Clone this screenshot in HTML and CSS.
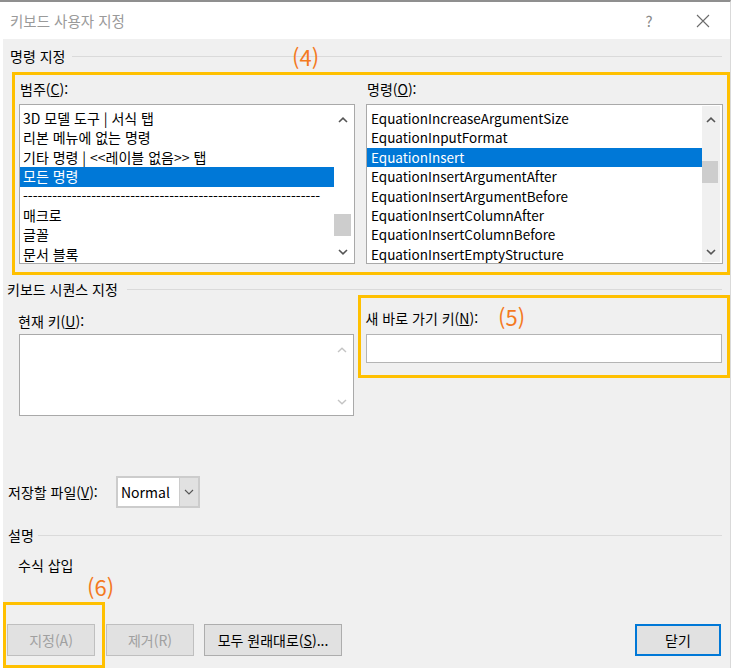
FILE: index.html
```html
<!DOCTYPE html>
<html lang="ko">
<head>
    <meta charset="UTF-8">
    <title>키보드 사용자 지정</title>
    <link rel="stylesheet" href="styles.css">
</head>
<body>
    <div class="window">
        <header class="titlebar">
            <span class="title">키보드 사용자 지정</span>
            <span class="help">?</span>
            <span class="close">
                <svg width="14" height="14" viewBox="0 0 14 14"><path d="M1 1L13 13M13 1L1 13" stroke="#6b6b6b" stroke-width="1.1" fill="none"/></svg>
            </span>
        </header>

        <main class="content">
            <span class="note note4">(4)</span>
            <span class="note note5">(5)</span>
            <span class="note note6">(6)</span>

            <div class="group-head head-cmd"><span>명령 지정</span><i class="rule"></i></div>

            <div class="mark mark-cmd">
                <div class="col col-cat">
                    <div class="label">범주(<u>C</u>):</div>
                    <div class="listbox">
                        <ul class="items">
                            <li>3D 모델 도구 | 서식 탭</li>
                            <li>리본 메뉴에 없는 명령</li>
                            <li>기타 명령 | &lt;&lt;레이블 없음&gt;&gt; 탭</li>
                            <li class="selected">모든 명령</li>
                            <li>-------------------------------------------------------------</li>
                            <li>매크로</li>
                            <li>글꼴</li>
                            <li>문서 블록</li>
                        </ul>
                        <div class="vscroll">
                            <span class="arrow arrow-up"><svg width="10" height="6" viewBox="0 0 10 6"><polyline points="1,5 5,1.2 9,5" fill="none" stroke="#555" stroke-width="1.6"/></svg></span>
                            <div class="track"><div class="thumb thumb-cat"></div></div>
                            <span class="arrow arrow-down"><svg width="10" height="6" viewBox="0 0 10 6"><polyline points="1,1 5,4.8 9,1" fill="none" stroke="#555" stroke-width="1.6"/></svg></span>
                        </div>
                    </div>
                </div>
                <div class="col col-cmd">
                    <div class="label">명령(<u>O</u>):</div>
                    <div class="listbox">
                        <ul class="items latin">
                            <li>EquationIncreaseArgumentSize</li>
                            <li>EquationInputFormat</li>
                            <li class="selected">EquationInsert</li>
                            <li>EquationInsertArgumentAfter</li>
                            <li>EquationInsertArgumentBefore</li>
                            <li>EquationInsertColumnAfter</li>
                            <li>EquationInsertColumnBefore</li>
                            <li>EquationInsertEmptyStructure</li>
                        </ul>
                        <div class="vscroll gray">
                            <span class="arrow arrow-up"><svg width="10" height="6" viewBox="0 0 10 6"><polyline points="1,5 5,1.2 9,5" fill="none" stroke="#555" stroke-width="1.6"/></svg></span>
                            <div class="track"><div class="thumb thumb-cmd"></div></div>
                            <span class="arrow arrow-down"><svg width="10" height="6" viewBox="0 0 10 6"><polyline points="1,1 5,4.8 9,1" fill="none" stroke="#555" stroke-width="1.6"/></svg></span>
                        </div>
                    </div>
                </div>
            </div>

            <div class="group-head head-seq"><span>키보드 시퀀스 지정</span><i class="rule"></i></div>

            <div class="seq-row">
                <div class="cur-key">
                    <div class="label">현재 키(<u>U</u>):</div>
                    <div class="listbox list-keys">
                        <div class="items"></div>
                        <div class="vscroll">
                            <span class="arrow key-up"><svg width="10" height="6" viewBox="0 0 10 6"><polyline points="1,5 5,1.2 9,5" fill="none" stroke="#c4c4c4" stroke-width="1.4"/></svg></span>
                            <div class="track"></div>
                            <span class="arrow key-down"><svg width="10" height="6" viewBox="0 0 10 6"><polyline points="1,1 5,4.8 9,1" fill="none" stroke="#c4c4c4" stroke-width="1.4"/></svg></span>
                        </div>
                    </div>
                </div>
                <div class="mark mark-new">
                    <div class="label">새 바로 가기 키(<u>N</u>):</div>
                    <div class="textbox"></div>
                </div>
            </div>

            <div class="save-row">
                <span class="label save-label">저장할 파일(<u>V</u>):</span>
                <div class="combo">
                    <span class="combo-value">Normal</span>
                    <span class="combo-btn"><svg width="10" height="6" viewBox="0 0 10 6"><polyline points="1,1 5,5 9,1" fill="none" stroke="#555" stroke-width="1.1"/></svg></span>
                </div>
            </div>

            <div class="group-head head-desc"><span>설명</span><i class="rule"></i></div>
            <p class="desc">수식 삽입</p>

            <div class="buttons">
                <div class="mark mark-assign">
                    <button class="btn" disabled>지정(A)</button>
                </div>
                <button class="btn btn-remove" disabled>제거(R)</button>
                <button class="btn btn-reset">모두 원래대로(<u>S</u>)...</button>
                <button class="btn btn-close">닫기</button>
            </div>
        </main>
    </div>
</body>
</html>
```

FILE: styles.css
```css
* {
    box-sizing: border-box;
}
body {
    margin: 0;
    background: #fff;
    font-family: "Noto Sans CJK KR", sans-serif;
    font-size: 14px;
    color: #000;
    overflow: hidden;
}
.window {
    width: 731px;
    height: 668px;
    border-top: 2px solid #8f8f8f;
    border-right: 1px solid #d9d9d9;
    display: flex;
    flex-direction: column;
}
.titlebar {
    height: 38px;
    display: flex;
    align-items: center;
    padding-right: 4px;
}
.title {
    flex: 1;
    margin-left: 10px;
    color: #9a9a9a;
    font-size: 14.5px;
}
.help {
    width: 46px;
    margin-right: 8px;
    text-align: center;
    color: #8a8a8a;
    font-size: 15px;
}
.close {
    width: 46px;
    display: flex;
    justify-content: center;
}
.content {
    flex: 1;
    margin-left: 3px;
    background: #f0f0f0;
    position: relative;
    padding-top: 7px;
}
.note {
    position: absolute;
    color: #f47a1f;
    font-size: 22px;
    line-height: 26px;
}
.note4 {
    left: 289px;
    top: 4px;
}
.note5 {
    left: 495px;
    top: 264px;
}
.note6 {
    left: 84px;
    top: 534px;
}
.group-head {
    display: flex;
    align-items: center;
    height: 20px;
    line-height: 20px;
    padding-right: 8px;
}
.rule {
    flex: 1;
    height: 1px;
    background: #dadada;
}
.head-cmd {
    padding-left: 7px;
}
.head-cmd .rule {
    margin-left: 7px;
}
.head-seq {
    padding-left: 4px;
    margin-top: 4px;
}
.head-seq .rule {
    margin-left: 9px;
}
.head-desc {
    padding-left: 5px;
    margin-top: 17px;
}
.head-desc .rule {
    margin-left: 4px;
}
.mark {
    border: 3px solid #ffc000;
}
.mark-cmd {
    display: flex;
    gap: 11px;
    margin: 6px 0 0 9px;
    padding: 4px 4px 8px;
}
.label {
    height: 20px;
    line-height: 20px;
    white-space: nowrap;
}
.col .label {
    margin-bottom: 5px;
    padding-left: 1px;
}
.col-cat {
    width: 336px;
}
.col-cmd {
    width: 357px;
}
.listbox {
    display: flex;
    height: 160px;
    border: 1px solid #a9a9a9;
    background: #fff;
}
.items {
    flex: 1;
    margin: 0;
    padding: 4px 0 0;
    list-style: none;
    overflow: hidden;
}
.items li {
    height: 19.4px;
    line-height: 19.4px;
    padding-left: 3px;
    white-space: nowrap;
    overflow: hidden;
}
.items.latin li {
    padding-left: 4px;
    font-size: 13.5px;
}
.items li.selected {
    background: #0078d7;
    color: #fff;
}
.vscroll {
    width: 18px;
    margin: 1px 2px 1px 0;
    display: flex;
    flex-direction: column;
}
.vscroll.gray {
    background: #f0f0f0;
}
.arrow {
    display: flex;
    justify-content: center;
    align-items: center;
}
.arrow-up {
    height: 28px;
}
.arrow-down {
    height: 20px;
}
.track {
    flex: 1;
}
.thumb {
    width: 17px;
    height: 22px;
    background: #cdcdcd;
}
.thumb-cat {
    margin-top: 80px;
}
.thumb-cmd {
    width: 16px;
    margin-top: 27px;
}
.seq-row {
    display: flex;
    align-items: flex-start;
    margin-top: -4px;
}
.cur-key {
    width: 335px;
    margin-left: 16px;
    padding-top: 16px;
}
.cur-key .label {
    margin-left: -1px;
}
.list-keys {
    height: 82px;
    margin-top: 3px;
}
.key-up {
    height: 28px;
}
.key-down {
    height: 24px;
}
.mark-new {
    width: 373px;
    height: 83px;
    margin-left: 4px;
    padding: 10px 5px 0;
}
.textbox {
    height: 29px;
    margin-top: 6px;
    border: 1px solid #b4b4b4;
    background: #fff;
}
.save-row {
    display: flex;
    align-items: center;
    height: 32px;
    margin-top: 60px;
    padding-left: 5px;
}
.save-label {
    width: 108px;
}
.combo {
    display: flex;
    width: 84px;
    height: 32px;
    border: 2px solid #cccccc;
    background: #fff;
}
.combo-value {
    flex: 1;
    padding-left: 3px;
    line-height: 28px;
}
.combo-btn {
    width: 19px;
    background: #e1e1e1;
    border-left: 1px solid #cccccc;
    display: flex;
    justify-content: center;
    align-items: center;
}
.desc {
    margin: 10px 0 0 15px;
    line-height: 20px;
}
.buttons {
    display: flex;
    align-items: flex-start;
    margin-top: 27px;
}
.mark-assign {
    width: 102px;
    height: 66px;
    padding: 19px 0 0 1px;
}
.btn {
    width: 88px;
    height: 32px;
    padding: 0;
    background: #e1e1e1;
    border: 1px solid #adadad;
    font-family: inherit;
    font-size: 14px;
    color: #000;
}
.btn:disabled {
    color: #a0a0a0;
    border-color: #bfbfbf;
}
.btn-remove {
    margin: 22px 0 0 1px;
}
.btn-reset {
    width: 138px;
    margin: 22px 0 0 10px;
}
.btn-close {
    width: 86px;
    margin: 22px 9px 0 auto;
    border: 2px solid #0078d7;
}
```
